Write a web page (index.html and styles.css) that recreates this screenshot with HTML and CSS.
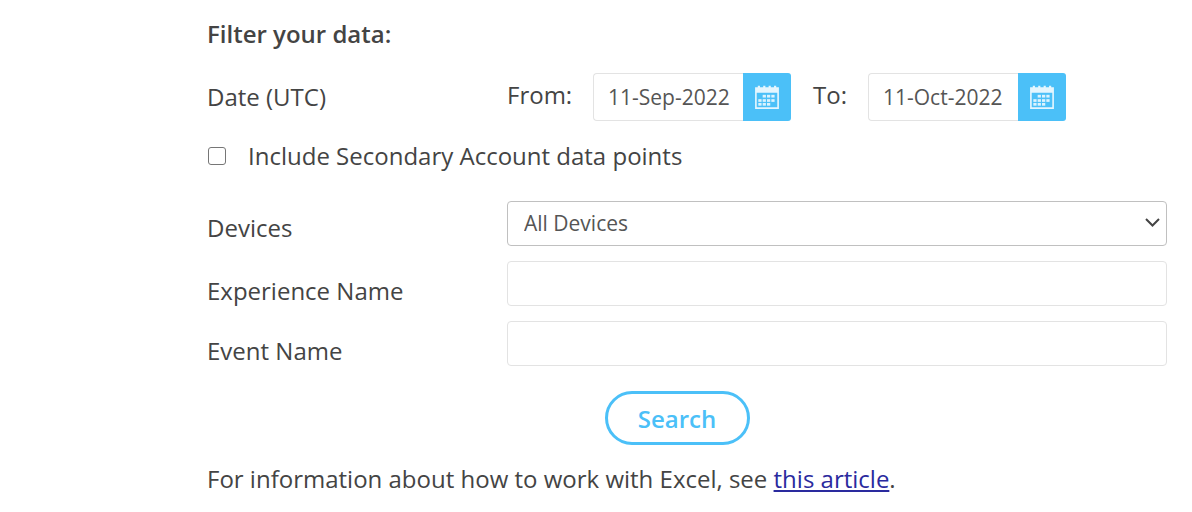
FILE: index.html
```html
<!DOCTYPE html>
<html lang="en">

<head>
    <meta charset="UTF-8">
    <title>Filter your data</title>
    <link rel="stylesheet" href="styles.css">
</head>

<body>

    <svg class="icon-defs" width="0" height="0">
        <symbol id="calendar" viewBox="0 0 24 24">
            <path fill="#fff" fill-opacity="0.85" fill-rule="evenodd" d="M1 3h2.500V1.500h2V3h3V1.500h2V3h3V1.500h2V3h3V1.500h2V3H23v20H1zM2.500 8v13.500h19V8z" />
            <g fill="#fff" fill-opacity="0.8">
                <rect x="4" y="14" width="3" height="2.500" />
                <rect x="4" y="17.500" width="3" height="2.500" />
                <rect x="8" y="10" width="3" height="2.500" />
                <rect x="8" y="14" width="3" height="2.500" />
                <rect x="8" y="17.500" width="3" height="2.500" />
                <rect x="12" y="10" width="3" height="2.500" />
                <rect x="12" y="14" width="3" height="2.500" />
                <rect x="12" y="17.500" width="3" height="2.500" />
                <rect x="16" y="10" width="3" height="2.500" />
                <rect x="16" y="14" width="3" height="2.500" />
            </g>
        </symbol>
    </svg>

    <form class="filter-form">
        <h2 class="filter-title">Filter your data:</h2>

        <!-- Date range -->
        <div class="date-row">
            <label class="row-label">Date (UTC)</label>
            <div class="date-fields">
                <span class="date-label">From:</span>
                <div class="date-picker">
                    <input type="text" class="date-input" value="11-Sep-2022">
                    <button type="button" class="date-btn"><svg class="date-icon"><use href="#calendar" /></svg></button>
                </div>
                <span class="date-label date-label-to">To:</span>
                <div class="date-picker">
                    <input type="text" class="date-input" value="11-Oct-2022">
                    <button type="button" class="date-btn"><svg class="date-icon"><use href="#calendar" /></svg></button>
                </div>
            </div>
        </div>

        <label class="check-row">
            <input type="checkbox" class="check-box">
            <span>Include Secondary Account data points</span>
        </label>

        <div class="field-row field-devices">
            <label class="row-label">Devices</label>
            <div class="select-wrap">
                <select class="field-select">
                    <option>All Devices</option>
                </select>
                <svg class="select-arrow" viewBox="0 0 15 9"><path d="M1 1l6.500 6.500L14 1" fill="none" stroke="#444" stroke-width="2" /></svg>
            </div>
        </div>

        <div class="field-row field-experience">
            <label class="row-label">Experience Name</label>
            <input type="text" class="field-input">
        </div>

        <div class="field-row field-event">
            <label class="row-label">Event Name</label>
            <input type="text" class="field-input">
        </div>

        <div class="search-row">
            <button type="button" class="search-btn">Search</button>
        </div>

        <p class="help-text">For information about how to work with Excel, see <a href="#">this article</a>.</p>
    </form>

</body>
</html>
```

FILE: styles.css
```css
body {
    font-family: "Open Sans", sans-serif;
    margin: 0;
    background-color: #fff;
    color: #444;
    font-size: 24px;
    overflow: hidden;
}

.icon-defs {
    position: absolute;
}

.filter-form {
    width: 960px;
    padding: 18px 0 0 207px;
}

.filter-title {
    margin: 0;
    font-size: 24px;
    line-height: 32px;
    font-weight: 600;
}

.row-label {
    display: block;
    width: 300px;
    flex-shrink: 0;
    line-height: 32px;
}

.date-row {
    display: flex;
    margin-top: 23px;
}

.date-row .row-label {
    padding-top: 8px;
}

.date-fields {
    display: flex;
}

.date-label {
    line-height: 32px;
    padding-top: 6px;
    width: 86px;
}

.date-label-to {
    width: 55px;
    margin-left: 22px;
}

.date-picker {
    display: flex;
    height: 48px;
}

.date-input {
    width: 150px;
    box-sizing: border-box;
    padding: 0 0 0 14px;
    border: 1px solid #e3e3e3;
    border-right: none;
    border-radius: 4px 0 0 4px;
    font-family: inherit;
    font-size: 21px;
    color: #555;
}

.date-btn {
    width: 48px;
    padding: 0;
    border: none;
    border-radius: 0 3px 3px 0;
    background-color: #4bc0f8;
    display: flex;
    align-items: center;
    justify-content: center;
}

.date-icon {
    width: 26px;
    height: 26px;
}

.check-row {
    display: flex;
    align-items: center;
    margin-top: 18px;
    line-height: 34px;
}

.check-box {
    width: 18px;
    height: 18px;
    margin: 0 22px 0 1px;
    appearance: none;
    border: 1.500px solid #767676;
    border-radius: 3px;
    background-color: #fff;
}

.field-row {
    display: flex;
}

.field-devices {
    margin-top: 28px;
}

.field-devices .row-label {
    padding-top: 11px;
}

.field-experience {
    margin-top: 15px;
}

.field-experience .row-label {
    padding-top: 14px;
}

.field-event {
    margin-top: 14px;
}

.field-event .row-label {
    padding-top: 14px;
}

.select-wrap {
    position: relative;
    width: 660px;
}

.field-select {
    width: 100%;
    height: 45px;
    padding: 0 0 1px 16px;
    border: 1px solid #c0c0c0;
    border-radius: 4px;
    background-color: #fff;
    appearance: none;
    font-family: inherit;
    font-size: 21px;
    color: #555;
}

.select-arrow {
    position: absolute;
    right: 7px;
    top: 17px;
    width: 15px;
    height: 9px;
}

.field-input {
    width: 660px;
    height: 45px;
    box-sizing: border-box;
    border: 1px solid #e3e3e3;
    border-radius: 4px;
}

.search-row {
    display: flex;
    justify-content: center;
    margin-top: 24px;
    padding-right: 20px;
}

.search-btn {
    width: 145px;
    height: 54px;
    border: 3px solid #4bc0f8;
    border-radius: 27px;
    background-color: #fff;
    font-family: inherit;
    font-size: 24px;
    font-weight: 600;
    color: #4bc0f8;
}

.help-text {
    margin: 17px 0 0;
    line-height: 34px;
}

.help-text a {
    color: #2a2a9e;
}
```
